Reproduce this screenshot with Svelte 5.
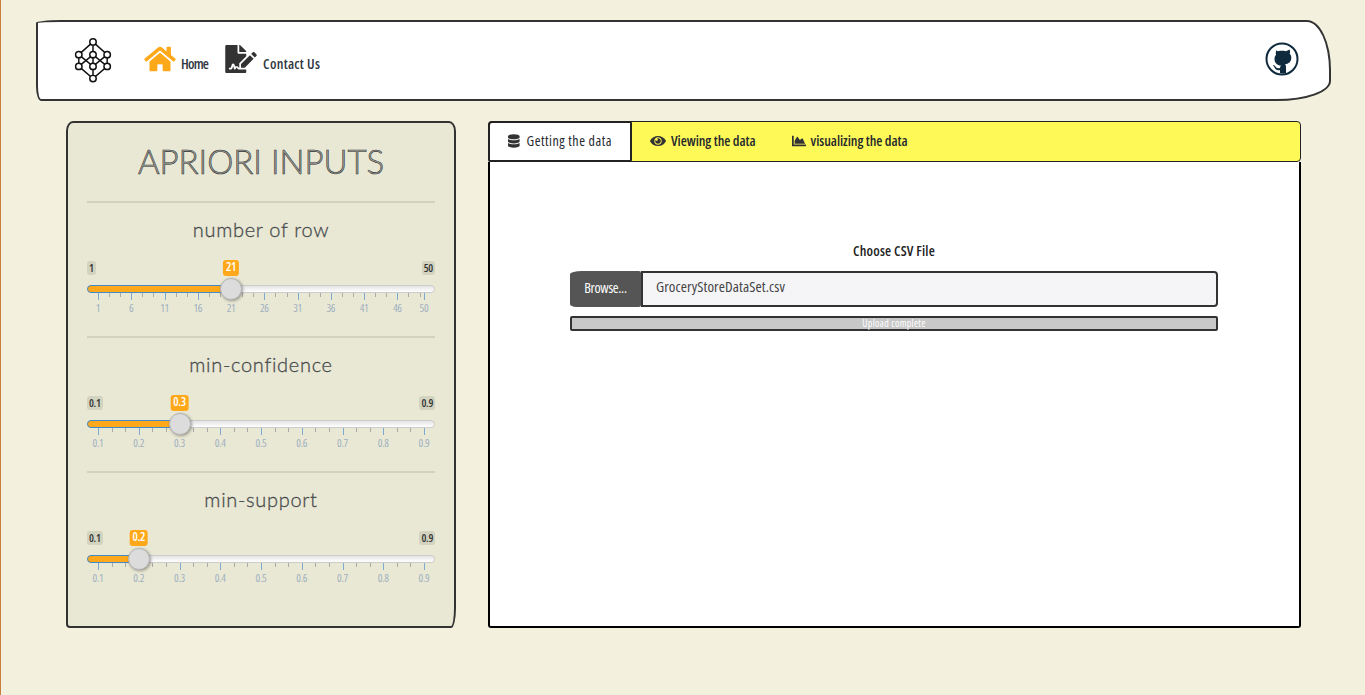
<script lang="ts">
	const sliders = [
		{ label: 'number of row', min: 1, max: 50, value: 21, decimals: 0, majors: [1, 6, 11, 16, 21, 26, 31, 36, 41, 46, 50], step: 5 },
		{ label: 'min-confidence', min: 0.1, max: 0.9, value: 0.3, decimals: 1, majors: [0.1, 0.2, 0.3, 0.4, 0.5, 0.6, 0.7, 0.8, 0.9], step: 0.1 },
		{ label: 'min-support', min: 0.1, max: 0.9, value: 0.2, decimals: 1, majors: [0.1, 0.2, 0.3, 0.4, 0.5, 0.6, 0.7, 0.8, 0.9], step: 0.1 }
	];

	const pct = (s, v) => ((v - s.min) / (s.max - s.min)) * 100;

	// two small ticks between each pair of labelled ones
	function minors(s) {
		const out = [];
		for (let i = 0; i < s.majors.length - 1; i++) {
			for (let k = 1; k <= 2; k++) {
				const v = s.majors[i] + (s.step * k) / 3;
				if (v < s.majors[i + 1]) out.push(pct(s, v));
			}
		}
		return out;
	}

	const nodes = [
		[18, 5], [3.5, 18], [18, 18], [32.5, 18], [3.5, 30], [18, 30], [32.5, 30], [18, 42.5]
	];
</script>

<div class="page">
	<header class="nav">
		<svg class="logo" viewBox="0 0 36 48" width="38" height="47" aria-hidden="true">
			<path d="M18 5L3.5 18V30L18 42.500L32.500 30V18ZM18 5V18V30V42.500M3.500 18L18 30L32.500 18M3.500 30L18 18L32.500 30" fill="none" stroke="#111" stroke-width="1.500" />
			{#each nodes as n}
				<circle cx={n[0]} cy={n[1]} r="3.300" fill="#fff" stroke="#111" stroke-width="1.500" />
			{/each}
		</svg>
		<a class="link home">
			<svg viewBox="0 0 576 512" width="32" height="28" aria-hidden="true"><path fill="#ffa91a" d="M280.37 148.26L96 300.11V464a16 16 0 0 0 16 16l112.06-.29a16 16 0 0 0 15.92-16V368a16 16 0 0 1 16-16h64a16 16 0 0 1 16 16v95.64a16 16 0 0 0 16 16.05L464 480a16 16 0 0 0 16-16V300L295.67 148.26a12.19 12.19 0 0 0-15.3 0zM571.6 251.47L488 182.56V44.05a12 12 0 0 0-12-12h-56a12 12 0 0 0-12 12v72.61L318.47 43a48 48 0 0 0-61 0L4.34 251.47a12 12 0 0 0-1.6 16.9l25.5 31A12 12 0 0 0 45.15 301l235.22-193.74a12.19 12.19 0 0 1 15.3 0L530.9 301a12 12 0 0 0 16.9-1.6l25.5-31a12 12 0 0 0-1.7-16.93z" /></svg>
			<span>Home</span>
		</a>
		<a class="link contact">
			<svg viewBox="0 0 576 512" width="32" height="28" aria-hidden="true"><path fill="#333" d="M218.17 424.14c-2.95-5.92-8.09-6.52-10.17-6.52s-7.22.59-10.02 6.19l-7.67 15.34c-6.37 12.78-25.03 11.37-29.48-2.09L144 386.59l-10.61 31.88c-5.89 17.66-22.38 29.53-41 29.53H80c-8.84 0-16-7.16-16-16s7.16-16 16-16h12.39c4.83 0 9.11-3.08 10.64-7.66l18.19-54.64c3.3-9.81 12.44-16.41 22.78-16.41s19.48 6.59 22.77 16.41l13.88 41.64c19.75-16.19 54.06-9.7 66 14.16 1.89 3.78 5.49 5.95 9.36 6.26v-82.12l128-127.09V160H248c-13.2 0-24-10.8-24-24V0H24C10.7 0 0 10.7 0 24v464c0 13.3 10.7 24 24 24h336c13.3 0 24-10.7 24-24v-40l-128-.11c-16.12-.31-30.58-9.28-37.83-23.75zM384 121.9c0-6.3-2.5-12.4-7-16.9L279.1 7c-4.5-4.5-10.6-7-17-7H256v128h128v-6.1zm-96 225.06V416h68.99l161.68-162.78-67.88-67.88L288 346.96zm280.54-179.63l-31.87-31.87c-9.94-9.94-26.07-9.94-36.01 0l-27.25 27.25 67.88 67.88 27.25-27.25c9.95-9.94 9.95-26.07 0-36.01z" /></svg>
			<span>Contact Us</span>
		</a>
		<svg class="gh" viewBox="0 0 34 34" width="34" height="34" aria-hidden="true">
			<circle cx="17" cy="17" r="15.500" fill="#fff" stroke="#0f2a3d" stroke-width="2" />
			<path fill="#0f2a3d" d="M9.500 7.500l3.500 1.800c2.500-.6 5.500-.6 8 0l3.500-1.800c.6 1.500.7 3 .3 4.200 1 1.100 1.500 2.500 1.500 4 0 4.300-2.800 6-6.300 6.500.8.700 1 1.600 1 2.800V31c-1.800.6-4.200.6-6 0v-3c-2.700.6-4.600-.4-5.600-2.800-.3-.7-.9-1.300-1.500-1.700l.6-.6c1 .4 1.700 1.100 2.300 2 .9 1.200 2.300 1.500 4.200 1 .1-.9.400-1.700 1-2.300-3.600-.5-6.500-2.200-6.500-6.900 0-1.500.5-2.900 1.500-4-.4-1.200-.3-2.700.3-4.200z" />
		</svg>
	</header>

	<div class="row">
		<aside class="side">
			<h1>APRIORI INPUTS</h1>
			{#each sliders as s}
				<hr />
				<section class="group">
					<h2>{s.label}</h2>
					<div class="slider">
						<div class="ends">
							<span class="end">{s.decimals ? s.min.toFixed(1) : s.min}</span>
							<span class="end">{s.decimals ? s.max.toFixed(1) : s.max}</span>
						</div>
						<div class="rail">
							<div class="track"></div>
							<div class="scale">
								<div class="fill" style="width: calc({pct(s, s.value)}% + 11px)"></div>
								<span class="single" style="left: {pct(s, s.value)}%">{s.decimals ? s.value.toFixed(1) : s.value}</span>
								<span class="thumb" style="left: {pct(s, s.value)}%"></span>
								{#each minors(s) as m}
									<i class="tick minor" style="left: {m}%"></i>
								{/each}
								{#each s.majors as v}
									<i class="tick major" style="left: {pct(s, v)}%"></i>
									<span class="num" style="left: {pct(s, v)}%">{s.decimals ? v.toFixed(1) : v}</span>
								{/each}
							</div>
						</div>
					</div>
				</section>
			{/each}
		</aside>

		<main class="main">
			<nav class="tabs">
				<a class="tab active">
					<svg viewBox="0 0 448 512" width="12" height="14" aria-hidden="true"><path fill="#333" d="M448 73.143v45.714C448 159.143 347.667 192 224 192S0 159.143 0 118.857V73.143C0 32.857 100.333 0 224 0s224 32.857 224 73.143zM448 176v102.857C448 319.143 347.667 352 224 352S0 319.143 0 278.857V176c48.125 33.143 136.208 48.572 224 48.572S399.874 209.143 448 176zm0 160v102.857C448 479.143 347.667 512 224 512S0 479.143 0 438.857V336c48.125 33.143 136.208 48.572 224 48.572S399.874 369.143 448 336z" /></svg>
					Getting the data
				</a>
				<a class="tab">
					<svg viewBox="0 0 576 512" width="16" height="14" aria-hidden="true"><path fill="#333" d="M569.354 231.631C512.97 135.949 407.81 72 288 72 168.14 72 63.004 135.994 6.646 231.631a47.999 47.999 0 0 0 0 48.739C63.031 376.051 168.19 440 288 440c119.86 0 224.996-63.994 281.354-159.631a47.997 47.997 0 0 0 0-48.738zM288 392c-75.162 0-136-60.827-136-136 0-75.162 60.826-136 136-136 75.162 0 136 60.826 136 136 0 75.162-60.826 136-136 136zm104-136c0 57.438-46.562 104-104 104s-104-46.562-104-104c0-17.708 4.431-34.379 12.236-48.973l-.001.032c0 23.651 19.173 42.823 42.824 42.823s42.824-19.173 42.824-42.823c0-23.651-19.173-42.824-42.824-42.824l-.32.001C253.621 156.431 270.292 152 288 152c57.438 0 104 46.562 104 104z" /></svg>
					Viewing the data
				</a>
				<a class="tab">
					<svg viewBox="0 0 512 512" width="14" height="14" aria-hidden="true"><path fill="#333" d="M500 384c6.600 0 12 5.400 12 12v40c0 6.600-5.400 12-12 12H12c-6.600 0-12-5.400-12-12V76c0-6.600 5.400-12 12-12h40c6.600 0 12 5.400 12 12v308h436zM372.700 159.500L288 216l-85.300-113.700c-5.100-6.800-15.500-6.300-19.900 1L96 248v104h384l-89.900-187.800c-3.200-6.500-11.400-8.700-17.400-4.700z" /></svg>
					visualizing the data
				</a>
			</nav>
			<div class="panel">
				<div class="upload">
					<label class="caption">Choose CSV File</label>
					<div class="group-input">
						<span class="browse">Browse...</span>
						<span class="file">GroceryStoreDataSet.csv</span>
					</div>
					<div class="progress">Upload complete</div>
				</div>
			</div>
		</main>
	</div>
</div>

<style>
	:global(body) {
		background: #f3f1de;
		border-left: 1px solid #c97f3c;
		overflow: hidden;
	}
	.page {
		box-sizing: border-box;
		height: 695px;
		padding: 20px 34px 0 35px;
		font-family: "Open Sans", "Noto Sans", sans-serif;
		font-stretch: 75%;
		letter-spacing: -0.3px;
		color: #333;
	}
	.nav {
		box-sizing: border-box;
		height: 81px;
		background: #fff;
		border: 2px solid #333;
		border-radius: 25px 24px 54px 5px / 3px 50px 20px 15px;
		display: flex;
		align-items: center;
		padding-left: 36px;
	}
	.logo { margin-right: 32px; margin-top: -1px; }
	.link {
		display: flex;
		align-items: flex-end;
		font-size: 14px;
		font-weight: 600;
		color: #2f3640;
		margin-top: -3px;
	}
	.link span { line-height: 20px; white-space: nowrap; }
	.home { margin-right: 17px; letter-spacing: -0.8px; }
	.home svg { margin-right: 5px; margin-bottom: 1px; }
	.contact { letter-spacing: 0.3px; }
	.contact svg { margin-right: 6px; margin-bottom: 1px; }
	.gh { margin-left: auto; margin-right: 30px; margin-top: -4px; }

	.row {
		display: grid;
		grid-template-columns: 390px 1fr;
		column-gap: 32px;
		margin: 20px 30px 0;
		height: 507px;
	}
	.side {
		box-sizing: border-box;
		background: #e9e8d5;
		border: 2px solid #333;
		border-radius: 7px 7px 5px 4px / 10px 10px 20px 4px;
		padding: 0 19px;
	}
	h1 {
		margin: 18px 0 20px;
		height: 40px;
		line-height: 40px;
		text-align: center;
		font-family: Lato, sans-serif;
		font-stretch: normal;
		letter-spacing: 0;
		font-weight: 300;
		font-size: 33px;
		color: #a8a89c;
		-webkit-text-stroke: 0.6px #2c2f33;
	}
	hr {
		border: 0;
		height: 2px;
		background: #d2d3bf;
		margin: 0;
	}
	.group { height: 133px; }
	h2 {
		margin: 0;
		padding-top: 14px;
		height: 24px;
		line-height: 24px;
		text-align: center;
		font-family: Lato, sans-serif;
		font-stretch: normal;
		font-weight: 300;
		font-size: 20px;
		letter-spacing: 0.7px;
		color: #55585a;
		-webkit-text-stroke: 0.3px #3a3d40;
	}
	.slider { margin-top: 20px; }
	.ends {
		display: flex;
		justify-content: space-between;
		height: 14px;
	}
	.end {
		background: #d3d4c0;
		border-radius: 3px;
		padding: 0 2px;
		font-size: 11px;
		line-height: 13px;
		height: 14px;
		font-weight: 600;
		color: #333;
	}
	.rail { position: relative; height: 38px; margin-top: 10px; }
	.track {
		position: absolute;
		left: 0;
		right: 0;
		top: 0;
		height: 6px;
		border: 1px solid #ccc;
		border-radius: 4px;
		background: linear-gradient(#e4e4e4, #fff);
	}
	.scale { position: absolute; left: 11px; right: 11px; top: 0; bottom: 0; }
	.fill {
		position: absolute;
		left: -11px;
		top: 0;
		box-sizing: border-box;
		height: 8px;
		background: #ffa91a;
		border: 1px solid #428bca;
		border-radius: 4px 0 0 4px;
	}
	.thumb {
		position: absolute;
		top: -7px;
		width: 20px;
		height: 20px;
		margin-left: -11px;
		border-radius: 50%;
		background: #dcdcdc;
		border: 1px solid #b5b5b5;
		box-shadow: 1px 1px 3px rgba(0, 0, 0, 0.35);
		z-index: 2;
	}
	.single {
		position: absolute;
		top: -25px;
		transform: translateX(-50%);
		background: #ffa91a;
		color: #fff;
		border-radius: 3px;
		padding: 0 3px;
		font-size: 12px;
		line-height: 14px;
		height: 16px;
		font-weight: 600;
		z-index: 1;
	}
	.tick { position: absolute; top: 8px; width: 1px; }
	.minor { height: 4px; background: #a8aca6; }
	.major { height: 7px; background: #7fa9cf; }
	.num {
		position: absolute;
		top: 16px;
		transform: translateX(-50%);
		font-size: 11px;
		line-height: 13px;
		color: #9fb0bf;
	}

	.main { display: flex; flex-direction: column; }
	.tabs {
		box-sizing: border-box;
		height: 41px;
		flex: none;
		display: flex;
		align-items: stretch;
		background: #fff957;
		border: 1px solid #222;
		border-radius: 4px;
		font-size: 14px;
		font-weight: 600;
		letter-spacing: -0.05px;
		color: #26292d;
	}
	.tab {
		display: flex;
		align-items: center;
		gap: 5px;
		padding: 0 18px 2px;
		white-space: nowrap;
	}
	.tab.active {
		box-sizing: border-box;
		width: 144px;
		margin: -1px 0 -1px -1px;
		background: #fff;
		border: 2px solid #222;
		border-radius: 4px 2px 2px 2px;
		font-weight: 400;
		letter-spacing: 0.5px;
		gap: 7px;
	}
	.panel {
		flex: 1;
		box-sizing: border-box;
		background: #fff;
		border: 2px solid #000;
		border-top: 0;
		border-radius: 0 0 3px 3px;
	}
	.upload { margin: 81px 81px 0 80px; }
	.caption {
		display: block;
		text-align: center;
		font-size: 14px;
		font-weight: 600;
		letter-spacing: 0.17px;
		line-height: 16px;
		color: #222;
	}
	.group-input {
		display: flex;
		height: 36px;
		margin-top: 12px;
	}
	.browse {
		width: 71px;
		flex: none;
		box-sizing: border-box;
		background: #555;
		color: #fff;
		font-size: 14px;
		line-height: 34px;
		text-align: center;
		border-radius: 12px 2px 2px 6px / 3px 2px 2px 3px;
	}
	.file {
		flex: 1;
		box-sizing: border-box;
		background: #f5f5f8;
		border: 2px solid #333;
		border-radius: 0 4px 4px 0;
		padding-left: 13px;
		font-size: 15px;
		letter-spacing: 0.1px;
		line-height: 27px;
		color: #444;
	}
	.progress {
		box-sizing: border-box;
		height: 15px;
		margin-top: 9px;
		background: #c8c8c8;
		border: 2px solid #333;
		border-radius: 2px;
		color: #fff;
		font-size: 10px;
		letter-spacing: 0.3px;
		line-height: 10px;
		text-align: center;
	}
</style>
